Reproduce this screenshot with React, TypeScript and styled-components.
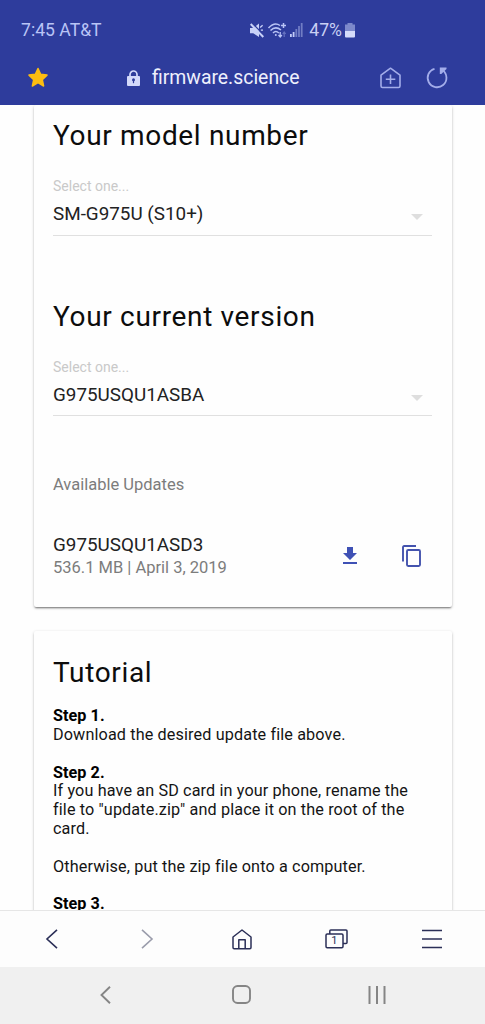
import React from "react";
import styled, { createGlobalStyle } from "styled-components";

const GlobalStyle = createGlobalStyle`
  *, *::before, *::after { box-sizing: border-box; }
  body {
    margin: 0;
    background: #fefefe;
    color: #0c0c0c;
    font-family: Roboto, "Liberation Sans", sans-serif;
  }
  h2, p { margin: 0; font-weight: 400; }
  svg { display: block; flex: none; overflow: visible; }
`;

const Screen = styled.div`
  display: flex;
  flex-direction: column;
  width: 485px;
  height: 1024px;
  overflow: hidden;
`;

const Header = styled.header`
  flex: none;
  height: 105px;
  background: #2e3c9c;
`;

const StatusBar = styled.div`
  display: flex;
  align-items: center;
  height: 60px;
  padding: 0 130px 0 21px;
  color: #b9c4f6;
  font-size: 17.6px;
`;

const Carrier = styled.span`
  margin-right: auto;
`;

const StatusIcons = styled.div`
  display: flex;
  align-items: center;
  gap: 4px;
`;

const Percent = styled.span`
  margin: 0 3px 0 6px;
  color: #c9d0f3;
  font-size: 17.6px;
`;

const AddressBar = styled.div`
  display: flex;
  align-items: center;
  height: 35px;
  padding: 0 37px 0 27px;
`;

const Address = styled.div`
  display: flex;
  align-items: center;
  justify-content: center;
  gap: 12px;
  margin-left: 78px;
  color: #eef0fc;
  font-size: 19.4px;
`;

const HeaderActions = styled.div`
  display: flex;
  gap: 26px;
  margin-left: auto;
`;

const Page = styled.main`
  flex: none;
  height: 805px;
  padding: 0 33px 0 34px;
  overflow: hidden;
`;

const Card = styled.section<{ $height: number; $top: number }>`
  height: ${(p) => p.$height}px;
  padding: ${(p) => p.$top}px 20px 0 19px;
  background: #fefefe;
  border-radius: 2px;
  box-shadow: 0 2px 2px -1px rgba(0, 0, 0, 0.42), 0 1px 3px rgba(0, 0, 0, 0.24);

  & + & { margin-top: 24px; }
`;

const Title = styled.h2`
  height: 34px;
  font-size: 28px;
  line-height: 34px;
  letter-spacing: 0.66px;
  white-space: nowrap;
`;

const Field = styled.div`
  margin: 25px 0 64px;
  height: 57.5px;
  border-bottom: 1px solid #e0e0e0;
`;

const FieldLabel = styled.div`
  color: #c9c9c9;
  font-size: 14px;
  line-height: 16px;
`;

const FieldValue = styled.div`
  display: flex;
  align-items: center;
  justify-content: space-between;
  margin-top: 9px;
  padding-right: 9px;
  color: #222;
  font-size: 18.85px;
  line-height: 22px;
`;

const Caret = styled.span`
  margin-top: 6px;
  border: 6px solid transparent;
  border-top-color: #dedede;
  border-bottom-width: 0;
`;

const Updates = styled.div`
  margin-top: -5.5px;
`;

const Muted = styled.div`
  color: #7c7c7c;
  font-size: 16.5px;
  line-height: 20px;
`;

const UpdateRow = styled.div`
  display: flex;
  align-items: center;
  margin-top: 39px;
  padding-right: 11px;
`;

const UpdateText = styled.div`
  margin-right: auto;
`;

const Version = styled.div`
  margin-bottom: 2px;
  color: #222;
  font-size: 18.85px;
  line-height: 22px;
`;

const UpdateActions = styled.div`
  display: flex;
  align-items: center;
  gap: 45px;
`;

const Tutorial = styled.div`
  margin-top: 17px;
  color: #141414;
  font-size: 16.2px;
  line-height: 18.85px;
  letter-spacing: 0.13px;
  white-space: nowrap;
`;

const Step = styled.div`
  margin-bottom: 18.85px;
`;

const StepName = styled.div`
  color: #000;
  font-weight: 700;
  letter-spacing: 0.05px;
`;

const Toolbar = styled.nav`
  display: grid;
  flex: none;
  grid-template-columns: repeat(5, 1fr);
  align-items: center;
  justify-items: center;
  height: 57px;
  padding: 0 6px 0 5px;
  border-top: 1px solid #e6e6e6;
  background: #fdfdfd;
`;

const SystemNav = styled.nav`
  display: grid;
  flex: none;
  grid-template-columns: repeat(3, 1fr);
  align-items: center;
  justify-items: center;
  height: 57px;
  padding: 0 40px 2px 37px;
  background: #f0f0f0;
`;

const MuteIcon = () => (
  <svg width="14" height="15" viewBox="0 0 14 15">
    <path d="M0 5h3.200L9 .5v13.500L3.200 10.200H0z" fill="#c9d2f8" />
    <path d="M10.200 4.500l2.400-2.300M10.800 7.200h2.200" stroke="#c9d2f8" strokeWidth="1.300" />
    <path d="M2 0L14 12.200" stroke="#2e3c9c" strokeWidth="1.300" />
    <path d="M.7 1l12.600 13" stroke="#c9d2f8" strokeWidth="2" />
  </svg>
);

const WifiIcon = () => (
  <svg width="18" height="15" viewBox="0 0 18 15" fill="none" stroke="#b9c4f6" strokeWidth="1.500">
    <path d="M.5 5Q6.500-1.500 12 2.500M2.500 7.500Q7.500 2.500 13 7M5 10Q7.800 7 10.800 10" />
    <path d="M15.500 0v5M13 2.500h5" />
    <circle cx="7.800" cy="12" r="1" fill="#b9c4f6" stroke="none" />
    <path d="M12.200 9v5M10.500 12l1.700 2 1.700-2" strokeWidth="1.300" />
    <path d="M16.200 14V9M14.700 11l1.500-2 1.500 2" strokeWidth="1.200" opacity=".4" />
  </svg>
);

const SignalIcon = () => (
  <svg width="13" height="14" viewBox="0 0 13 14" fill="#c3ccf7">
    <path d="M0 11h1.800v3H0zM2.700 9h1.800v5H2.700z" />
    <path d="M5.400 6h1.800v8H5.400zM8.100 3h1.800v11H8.100zM10.800 0h1.800v14h-1.800z" opacity=".45" />
  </svg>
);

const BatteryIcon = () => (
  <svg width="10" height="15" viewBox="0 0 10 15">
    <path d="M2.500 0h5v1.500H10V8H0V1.500h2.500z" fill="#7d89cb" />
    <path d="M0 8h10v5.500a1 1 0 0 1-1 1H1a1 1 0 0 1-1-1z" fill="#d5dbfa" />
  </svg>
);

const StarIcon = () => (
  <svg width="22" height="22" viewBox="0 0 22 22">
    <path
      d="M11 1.500l2.700 5.800 6.300.8-4.700 4.500 1.300 6.400-5.600-3.300L5.400 19l1.300-6.400L2 8.100l6.300-.8z"
      fill="#fdbd10"
      stroke="#fdbd10"
      strokeWidth="1.500"
      strokeLinejoin="round"
    />
  </svg>
);

const LockIcon = () => (
  <svg width="13" height="16" viewBox="0 0 13 16">
    <path d="M3 7V4.500a3.500 3.500 0 0 1 7 0V7" fill="none" stroke="#d3d9fa" strokeWidth="1.700" />
    <rect y="6" width="13" height="10" rx="1" fill="#d3d9fa" />
    <circle cx="6.500" cy="9.800" r="1.500" fill="#2e3c9c" />
    <path d="M6.500 10v3.200" stroke="#2e3c9c" strokeWidth="1.200" />
  </svg>
);

const AddHomeIcon = () => (
  <svg width="21" height="22" viewBox="0 0 21 22" fill="none" stroke="#a3adea" strokeWidth="1.600">
    <path d="M1 8.200L10.500 1.200 20 8.200V19a1.500 1.500 0 0 1-1.500 1.500h-16A1.500 1.500 0 0 1 1 19z" strokeLinejoin="round" />
    <path d="M10.500 7.500v9.500M5.800 12.200h9.500" />
  </svg>
);

const ReloadIcon = () => (
  <svg width="21" height="22" viewBox="0 0 21 22" fill="none" stroke="#a3adea" strokeWidth="1.800">
    <path d="M7.500 1.800A9.400 9.400 0 1 0 15.800 3.400" />
    <path d="M12.800.4h6.700v1.500L14.300 7h-1.500z" fill="#a3adea" stroke="none" />
  </svg>
);

const DownloadIcon = () => (
  <svg width="14" height="17" viewBox="0 0 14 17" fill="#3f51b5">
    <path d="M4 0h6v6h4l-7 7-7-7h4z" />
    <path d="M0 15h14v2H0z" />
  </svg>
);

const CopyIcon = () => (
  <svg width="19" height="22" viewBox="0 0 19 22" fill="none" stroke="#4453ae" strokeWidth="1.900">
    <path d="M1 16.500V2.200Q1 1 2.200 1H14" />
    <rect x="5" y="5" width="13" height="16" rx="1.200" />
  </svg>
);

const Chevron = ({ flip, color }: { flip?: boolean; color: string }) => (
  <svg width="12" height="20" viewBox="0 0 12 20" fill="none" stroke={color} strokeWidth="1.600">
    <path d={flip ? "M1 .8L11 10 1 19.200" : "M11 .8L1 10l10 9.200"} />
  </svg>
);

const HomeIcon = () => (
  <svg width="20" height="21" viewBox="0 0 20 21" fill="none" stroke="#2b2f57" strokeWidth="1.500" strokeLinejoin="round">
    <path d="M1 8L10 1l9 7v10.500a1.200 1.200 0 0 1-1.200 1.200H2.200A1.200 1.200 0 0 1 1 18.500z" />
    <path d="M6.800 19.500v-8.700h6.400v8.700" />
  </svg>
);

const TabsGlyph = styled.span`
  position: relative;
  display: block;
`;

const TabCount = styled.span`
  position: absolute;
  left: 0;
  top: 5px;
  width: 18px;
  color: #2b2f57;
  font-size: 11px;
  line-height: 14px;
  text-align: center;
`;

const TabsIcon = () => (
  <TabsGlyph>
    <svg width="23" height="20" viewBox="0 0 23 20" fill="none" stroke="#2b2f57" strokeWidth="1.500">
      <rect x="1" y="5" width="17" height="13.800" rx="1.200" />
      <path d="M4.800 5V2Q4.800 1 5.800 1h15.200Q22 1 22 2v11.500q0 1-1 1h-3" />
    </svg>
    <TabCount>1</TabCount>
  </TabsGlyph>
);

const MenuIcon = () => (
  <svg width="20" height="20" viewBox="0 0 20 20" stroke="#2b2f57" strokeWidth="1.500">
    <path d="M0 1.500h20M0 10h20M0 18.500h20" />
  </svg>
);

const BackIcon = () => (
  <svg width="11" height="18" viewBox="0 0 11 18" fill="none" stroke="#858585" strokeWidth="1.900">
    <path d="M10 .8L1.500 9l8.500 8.200" />
  </svg>
);

const SystemHomeIcon = () => (
  <svg width="19" height="19" viewBox="0 0 19 19" fill="none" stroke="#858585" strokeWidth="1.900">
    <rect x="1" y="1" width="17" height="17" rx="4.500" />
  </svg>
);

const RecentsIcon = () => (
  <svg width="18" height="18" viewBox="0 0 18 18" stroke="#858585" strokeWidth="2">
    <path d="M1.500 0v18M9 0v18M16.500 0v18" />
  </svg>
);

const Select = ({ title, value }: { title: string; value: string }) => (
  <>
    <Title>{title}</Title>
    <Field>
      <FieldLabel>Select one...</FieldLabel>
      <FieldValue>
        {value}
        <Caret />
      </FieldValue>
    </Field>
  </>
);

export default function App() {
  return (
    <Screen>
      <GlobalStyle />
      <Header>
        <StatusBar>
          <Carrier>7:45 AT&amp;T</Carrier>
          <StatusIcons>
            <MuteIcon />
            <WifiIcon />
            <SignalIcon />
          </StatusIcons>
          <Percent>47%</Percent>
          <BatteryIcon />
        </StatusBar>
        <AddressBar>
          <StarIcon />
          <Address>
            <LockIcon />
            firmware.science
          </Address>
          <HeaderActions>
            <AddHomeIcon />
            <ReloadIcon />
          </HeaderActions>
        </AddressBar>
      </Header>
      <Page>
        <Card $height={502} $top={14}>
          <Select title="Your model number" value="SM-G975U (S10+)" />
          <Select title="Your current version" value="G975USQU1ASBA" />
          <Updates>
            <Muted>Available Updates</Muted>
            <UpdateRow>
              <UpdateText>
                <Version>G975USQU1ASD3</Version>
                <Muted>536.1 MB | April 3, 2019</Muted>
              </UpdateText>
              <UpdateActions>
                <DownloadIcon />
                <CopyIcon />
              </UpdateActions>
            </UpdateRow>
          </Updates>
        </Card>
        <Card $height={320} $top={25}>
          <Title>Tutorial</Title>
          <Tutorial>
            <Step>
              <StepName>Step 1.</StepName>
              <p>Download the desired update file above.</p>
            </Step>
            <Step>
              <StepName>Step 2.</StepName>
              <p>
                If you have an SD card in your phone, rename the
                <br />
                file to "update.zip" and place it on the root of the
                <br />
                card.
              </p>
            </Step>
            <Step>
              <p>Otherwise, put the zip file onto a computer.</p>
            </Step>
            <Step>
              <StepName>Step 3.</StepName>
            </Step>
          </Tutorial>
        </Card>
      </Page>
      <Toolbar>
        <Chevron color="#2b2f57" />
        <Chevron flip color="#9a9cab" />
        <HomeIcon />
        <TabsIcon />
        <MenuIcon />
      </Toolbar>
      <SystemNav>
        <BackIcon />
        <SystemHomeIcon />
        <RecentsIcon />
      </SystemNav>
    </Screen>
  );
}
